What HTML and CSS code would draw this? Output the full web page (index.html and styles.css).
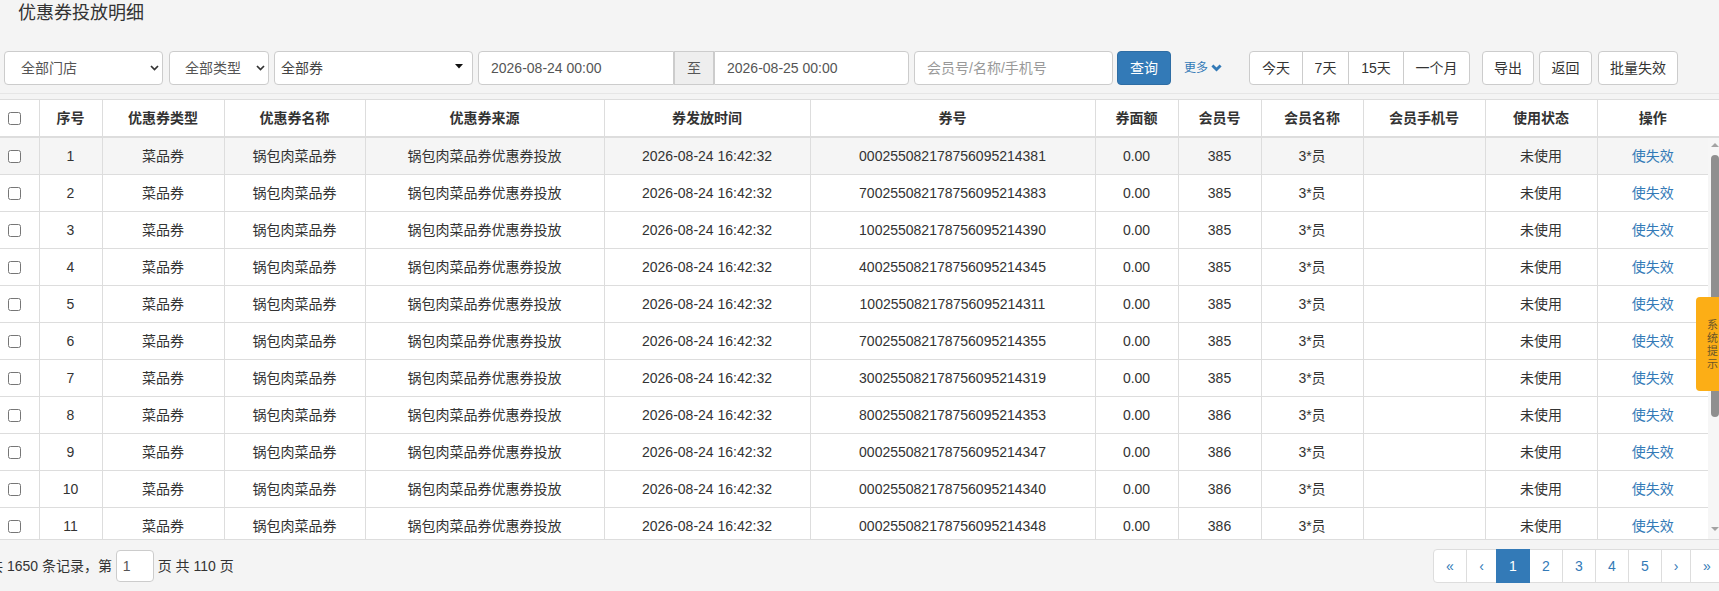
FILE: index.html
```html
<!DOCTYPE html>
<html lang="zh-CN">
<head>
<meta charset="utf-8">
<title>优惠券投放明细</title>
<link rel="stylesheet" href="styles.css">
</head>
<body>
<div class="page">
  <h1 class="title">优惠券投放明细</h1>

  <div class="toolbar">
    <div class="ctl sel sel-store"><span>全部门店</span><svg class="chev" width="9" height="6" viewBox="0 0 9 6"><polyline points="1,1 4.5,4.6 8,1" fill="none" stroke="#333" stroke-width="1.7"/></svg></div>
    <div class="ctl sel sel-type"><span>全部类型</span><svg class="chev" width="9" height="6" viewBox="0 0 9 6"><polyline points="1,1 4.5,4.6 8,1" fill="none" stroke="#333" stroke-width="1.7"/></svg></div>
    <div class="ctl sel sel-coupon"><span>全部券</span><svg class="caret" width="8" height="5" viewBox="0 0 8 5"><polygon points="0,0 8,0 4,4.6" fill="#111"/></svg></div>
    <div class="date-group">
      <div class="ctl date date-start">2026-08-24 00:00</div>
      <div class="ctl addon">至</div>
      <div class="ctl date date-end">2026-08-25 00:00</div>
    </div>
    <div class="ctl member"><span class="ph">会员号/名称/手机号</span></div>
    <div class="btn btn-primary btn-query">查询</div>
    <a class="more">更多<svg class="more-chev" width="11" height="8" viewBox="0 0 11 8"><polyline points="1.4,1.4 5.5,5.6 9.6,1.4" fill="none" stroke="#337ab7" stroke-width="2.8"/></svg></a>
    <div class="btn-group">
      <div class="btn g-today">今天</div>
      <div class="btn g-7">7天</div>
      <div class="btn g-15">15天</div>
      <div class="btn g-month">一个月</div>
    </div>
    <div class="btn b-export">导出</div>
    <div class="btn b-back">返回</div>
    <div class="btn b-batch">批量失效</div>
  </div>

  <div class="grid">
    <div class="grid-head">
      <table class="tbl">
        <colgroup>
          <col class="c-cb"><col class="c-no"><col class="c-type"><col class="c-name"><col class="c-src"><col class="c-time"><col class="c-code"><col class="c-amt"><col class="c-mid"><col class="c-mname"><col class="c-phone"><col class="c-state"><col class="c-op">
        </colgroup>
        <thead>
          <tr>
            <th><input type="checkbox" class="cb"></th>
            <th>序号</th><th>优惠券类型</th><th>优惠券名称</th><th>优惠券来源</th><th>券发放时间</th><th>券号</th><th>券面额</th><th>会员号</th><th>会员名称</th><th>会员手机号</th><th>使用状态</th><th class="last">操作</th>
          </tr>
        </thead>
      </table>
    </div>
    <div class="grid-body">
      <div class="body-scroll">
        <table class="tbl">
          <colgroup>
            <col class="c-cb"><col class="c-no"><col class="c-type"><col class="c-name"><col class="c-src"><col class="c-time"><col class="c-code"><col class="c-amt"><col class="c-mid"><col class="c-mname"><col class="c-phone"><col class="c-state"><col class="c-op">
          </colgroup>
          <tbody>
            <tr class="hover"><td><input type="checkbox" class="cb"></td><td>1</td><td>菜品券</td><td>锅包肉菜品券</td><td>锅包肉菜品券优惠券投放</td><td>2026-08-24 16:42:32</td><td>000255082178756095214381</td><td>0.00</td><td>385</td><td>3*员</td><td></td><td>未使用</td><td class="last"><a class="op">使失效</a></td></tr>
            <tr><td><input type="checkbox" class="cb"></td><td>2</td><td>菜品券</td><td>锅包肉菜品券</td><td>锅包肉菜品券优惠券投放</td><td>2026-08-24 16:42:32</td><td>700255082178756095214383</td><td>0.00</td><td>385</td><td>3*员</td><td></td><td>未使用</td><td class="last"><a class="op">使失效</a></td></tr>
            <tr><td><input type="checkbox" class="cb"></td><td>3</td><td>菜品券</td><td>锅包肉菜品券</td><td>锅包肉菜品券优惠券投放</td><td>2026-08-24 16:42:32</td><td>100255082178756095214390</td><td>0.00</td><td>385</td><td>3*员</td><td></td><td>未使用</td><td class="last"><a class="op">使失效</a></td></tr>
            <tr><td><input type="checkbox" class="cb"></td><td>4</td><td>菜品券</td><td>锅包肉菜品券</td><td>锅包肉菜品券优惠券投放</td><td>2026-08-24 16:42:32</td><td>400255082178756095214345</td><td>0.00</td><td>385</td><td>3*员</td><td></td><td>未使用</td><td class="last"><a class="op">使失效</a></td></tr>
            <tr><td><input type="checkbox" class="cb"></td><td>5</td><td>菜品券</td><td>锅包肉菜品券</td><td>锅包肉菜品券优惠券投放</td><td>2026-08-24 16:42:32</td><td>100255082178756095214311</td><td>0.00</td><td>385</td><td>3*员</td><td></td><td>未使用</td><td class="last"><a class="op">使失效</a></td></tr>
            <tr><td><input type="checkbox" class="cb"></td><td>6</td><td>菜品券</td><td>锅包肉菜品券</td><td>锅包肉菜品券优惠券投放</td><td>2026-08-24 16:42:32</td><td>700255082178756095214355</td><td>0.00</td><td>385</td><td>3*员</td><td></td><td>未使用</td><td class="last"><a class="op">使失效</a></td></tr>
            <tr><td><input type="checkbox" class="cb"></td><td>7</td><td>菜品券</td><td>锅包肉菜品券</td><td>锅包肉菜品券优惠券投放</td><td>2026-08-24 16:42:32</td><td>300255082178756095214319</td><td>0.00</td><td>385</td><td>3*员</td><td></td><td>未使用</td><td class="last"><a class="op">使失效</a></td></tr>
            <tr><td><input type="checkbox" class="cb"></td><td>8</td><td>菜品券</td><td>锅包肉菜品券</td><td>锅包肉菜品券优惠券投放</td><td>2026-08-24 16:42:32</td><td>800255082178756095214353</td><td>0.00</td><td>386</td><td>3*员</td><td></td><td>未使用</td><td class="last"><a class="op">使失效</a></td></tr>
            <tr><td><input type="checkbox" class="cb"></td><td>9</td><td>菜品券</td><td>锅包肉菜品券</td><td>锅包肉菜品券优惠券投放</td><td>2026-08-24 16:42:32</td><td>000255082178756095214347</td><td>0.00</td><td>386</td><td>3*员</td><td></td><td>未使用</td><td class="last"><a class="op">使失效</a></td></tr>
            <tr><td><input type="checkbox" class="cb"></td><td>10</td><td>菜品券</td><td>锅包肉菜品券</td><td>锅包肉菜品券优惠券投放</td><td>2026-08-24 16:42:32</td><td>000255082178756095214340</td><td>0.00</td><td>386</td><td>3*员</td><td></td><td>未使用</td><td class="last"><a class="op">使失效</a></td></tr>
            <tr><td><input type="checkbox" class="cb"></td><td>11</td><td>菜品券</td><td>锅包肉菜品券</td><td>锅包肉菜品券优惠券投放</td><td>2026-08-24 16:42:32</td><td>000255082178756095214348</td><td>0.00</td><td>386</td><td>3*员</td><td></td><td>未使用</td><td class="last"><a class="op">使失效</a></td></tr>
          </tbody>
        </table>
      </div>
      <div class="vscroll">
        <span class="arrow-up"></span>
        <span class="thumb"></span>
        <span class="spacer"></span>
        <span class="arrow-down"></span>
      </div>
    </div>
  </div>

  <div class="pager-bar">
    <div class="pager-info">共 1650 条记录，第 <input class="page-input" type="text" value="1"> 页 共 110 页</div>
    <ul class="pagination">
      <li class="p-wide"><a>«</a></li>
      <li class="p-narrow"><a>‹</a></li>
      <li class="p-num active"><a>1</a></li>
      <li class="p-num"><a>2</a></li>
      <li class="p-num"><a>3</a></li>
      <li class="p-num"><a>4</a></li>
      <li class="p-num"><a>5</a></li>
      <li class="p-narrow2"><a>›</a></li>
      <li class="p-wide last"><a>»</a></li>
    </ul>
  </div>
</div>

<div class="sys-tip"><span>系统提示</span></div>
</body>
</html>
```

FILE: styles.css
```css
* { box-sizing: border-box; }

html, body {
  margin: 0;
  padding: 0;
  overflow: hidden;
}

body {
  width: 1719px;
  height: 591px;
  position: relative;
  background: #f4f4f4;
  font-family: "Liberation Sans", "Noto Sans CJK SC", sans-serif;
  font-size: 14px;
  line-height: 20px;
  color: #333;
}

.title {
  margin: 0;
  height: 27px;
  line-height: 27px;
  font-size: 18px;
  font-weight: normal;
  padding-left: 18px;
  color: #333;
}

/* ---------- toolbar ---------- */
.toolbar {
  display: flex;
  align-items: center;
  margin-top: 24px;
  padding-left: 4px;
  padding-bottom: 8px;
  border-bottom: 1px solid #e6e6e6;
}

.ctl {
  flex: none;
  height: 34px;
  border: 1px solid #ccc;
  border-radius: 4px;
  background: #fff;
  color: #555;
  display: flex;
  align-items: center;
  white-space: nowrap;
}

.sel { justify-content: space-between; }
.sel-store { width: 159px; padding: 0 3px 0 16px; }
.sel-type { width: 100px; margin-left: 6px; padding: 0 3px 0 15px; }
.sel-coupon { width: 199px; margin-left: 5px; padding: 0 9px 0 6px; color: #444; }
.chev { display: block; }
.caret { display: block; margin-top: -4px; }

.date-group {
  display: flex;
  margin-left: 5px;
}
.date { padding-left: 12px; }
.date-start { width: 196px; border-radius: 4px 0 0 4px; }
.addon {
  width: 40px;
  justify-content: center;
  background: #eee;
  border-radius: 0;
}
.date-end { width: 195px; border-radius: 0 4px 4px 0; }

.member { width: 199px; margin-left: 5px; padding-left: 12px; }
.ph { color: #999; }

.btn {
  flex: none;
  height: 34px;
  display: flex;
  align-items: center;
  justify-content: center;
  border: 1px solid #ccc;
  border-radius: 4px;
  background: #fff;
  color: #333;
  white-space: nowrap;
}

.btn-primary {
  background: #337ab7;
  border-color: #2e6da4;
  color: #fff;
}
.btn-query { width: 54px; margin-left: 4px; }

.more {
  flex: none;
  display: flex;
  align-items: center;
  margin-left: 13px;
  font-size: 12px;
  color: #337ab7;
}
.more-chev { display: block; margin-left: 3px; margin-top: -1px; }

.btn-group {
  display: flex;
  margin-left: 27px;
}
.btn-group .btn { border-radius: 0; }
.btn-group .btn + .btn { margin-left: -1px; }
.g-today { width: 54px; border-radius: 4px 0 0 4px !important; }
.g-7 { width: 47px; }
.g-15 { width: 56px; }
.g-month { width: 67px; border-radius: 0 4px 4px 0 !important; }

.b-export { width: 52px; margin-left: 12px; }
.b-back { width: 53px; margin-left: 5px; }
.b-batch { width: 80px; margin-left: 6px; }

/* ---------- grid ---------- */
.grid {
  margin-top: 5px;
  margin-left: -10px;
}

.grid-head {
  background: #fff;
  border-top: 1px solid #ddd;
  border-bottom: 2px solid #ddd;
}

.grid-body {
  display: flex;
  border-bottom: 1px solid #ddd;
}

.body-scroll {
  flex: none;
  width: 1718px;
  height: 401px;
  overflow: hidden;
  background: #fff;
}

.tbl {
  width: 1718px;
  table-layout: fixed;
  border-collapse: collapse;
  background: #fff;
}

.c-cb { width: 49px; }
.c-no { width: 63px; }
.c-type { width: 122px; }
.c-name { width: 141px; }
.c-src { width: 239px; }
.c-time { width: 206px; }
.c-code { width: 285px; }
.c-amt { width: 83px; }
.c-mid { width: 83px; }
.c-mname { width: 102px; }
.c-phone { width: 122px; }
.c-state { width: 112px; }
.c-op { width: 111px; }

.tbl th,
.tbl td {
  padding: 8px 0;
  height: 36px;
  line-height: 20px;
  text-align: center;
  vertical-align: middle;
  white-space: nowrap;
  border-right: 1px solid #ddd;
  color: #333;
}

.tbl th { font-weight: bold; }
.tbl td { border-bottom: 1px solid #ddd; }
.tbl .last { border-right: none; }

.tbl tr.hover td { background: #f5f5f5; }

.cb {
  width: 13px;
  height: 13px;
  margin: 0;
  vertical-align: middle;
  position: relative;
  top: -1px;
}

.op { color: #337ab7; }

/* fake scrollbar */
.vscroll {
  flex: 1;
  display: flex;
  flex-direction: column;
  align-items: center;
  padding-left: 2px;
  background: #f6f6f6;
}
.arrow-up {
  margin-top: 5px;
  width: 0;
  height: 0;
  border-left: 4px solid transparent;
  border-right: 4px solid transparent;
  border-bottom: 4px solid #a3a3a3;
}
.thumb {
  margin-top: 8px;
  width: 8px;
  height: 262px;
  border-radius: 4px;
  background: #8f8f8f;
}
.spacer { flex: 1; }
.arrow-down {
  margin-bottom: 8px;
  width: 0;
  height: 0;
  border-left: 4px solid transparent;
  border-right: 4px solid transparent;
  border-top: 4px solid #a3a3a3;
}

/* ---------- pager ---------- */
.pager-bar {
  display: flex;
  justify-content: space-between;
  align-items: center;
  margin-top: 9px;
  margin-left: -11px;
  margin-right: -5px;
  height: 34px;
}

.pager-info {
  display: flex;
  align-items: center;
  white-space: pre;
  color: #333;
}

.page-input {
  width: 38px;
  height: 32px;
  margin: 0;
  padding: 0 6px;
  border: 1px solid #ccc;
  border-radius: 4px;
  background: #fff;
  font-family: inherit;
  font-size: 14px;
  color: #555;
}

.pagination {
  display: flex;
  margin: 0;
  padding: 0;
  list-style: none;
}
.pagination li + li { margin-left: -1px; }
.pagination a {
  display: block;
  height: 34px;
  padding: 6px 0;
  text-align: center;
  border: 1px solid #ddd;
  background: #fff;
  color: #337ab7;
  line-height: 20px;
}
.p-wide { width: 34px; }
.p-narrow { width: 31px; }
.p-narrow2 { width: 30px; }
.p-num { width: 34px; }
.pagination li:first-child a { border-radius: 4px 0 0 4px; }
.pagination li.last a { border-radius: 0 4px 4px 0; }
.pagination .active a {
  background: #337ab7;
  border-color: #337ab7;
  color: #fff;
  position: relative;
}

/* ---------- side tip ---------- */
.sys-tip {
  position: absolute;
  top: 297px;
  right: -7px;
  width: 30px;
  height: 94px;
  border-radius: 4px 0 0 4px;
  background: #fcae16;
  display: flex;
  align-items: center;
  justify-content: center;
}
.sys-tip span {
  writing-mode: vertical-rl;
  font-size: 11px;
  line-height: 11px;
  letter-spacing: 2px;
  color: #6a5526;
  margin-top: 2px;
}
```
